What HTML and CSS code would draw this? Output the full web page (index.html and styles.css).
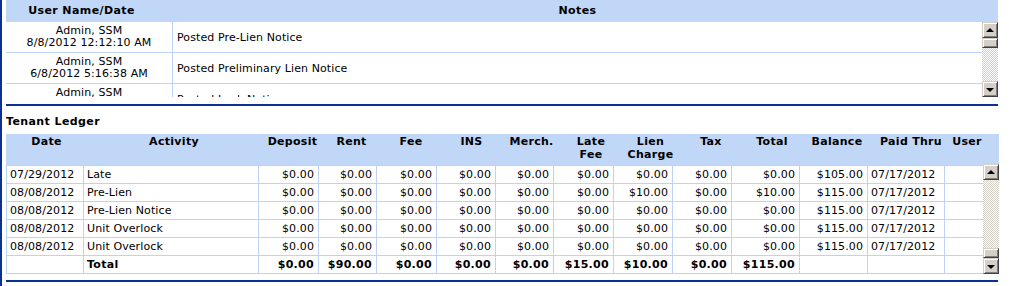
FILE: index.html
```html
<!DOCTYPE html>
<html>
<head>
<meta charset="utf-8">
<title>Tenant Notes and Ledger</title>
<link rel="stylesheet" href="styles.css">
</head>
<body>
<div class="page">
  <section class="notes">
    <div class="notes-head">
      <div class="nh-user">User Name/Date</div>
      <div class="nh-notes">Notes</div>
    </div>
    <div class="notes-body">
      <div class="notes-rows">
        <div class="note-row">
          <div class="n-user">Admin, SSM<br>8/8/2012 12:12:10 AM</div>
          <div class="n-text">Posted Pre-Lien Notice</div>
        </div>
        <div class="note-row">
          <div class="n-user">Admin, SSM<br>6/8/2012 5:16:38 AM</div>
          <div class="n-text">Posted Preliminary Lien Notice</div>
        </div>
        <div class="note-row">
          <div class="n-user">Admin, SSM<br>6/8/2012 5:10:02 AM</div>
          <div class="n-text">Posted Lock Notice</div>
        </div>
      </div>
      <div class="vscroll notes-scroll">
        <div class="sb-btn sb-up"><span class="tri-up"></span></div>
        <div class="sb-thumb"></div>
        <div class="sb-track"></div>
        <div class="sb-btn sb-down"><span class="tri-down"></span></div>
      </div>
    </div>
  </section>
  <div class="rule"></div>

  <h2 class="ledger-title">Tenant Ledger</h2>
  <section class="ledger">
    <div class="ledger-head">
      <div>Date</div>
      <div>Activity</div>
      <div>Deposit</div>
      <div>Rent</div>
      <div>Fee</div>
      <div>INS</div>
      <div>Merch.</div>
      <div>Late<br>Fee</div>
      <div>Lien<br>Charge</div>
      <div>Tax</div>
      <div>Total</div>
      <div>Balance</div>
      <div>Paid Thru</div>
      <div>User</div>
      <div></div>
    </div>
    <div class="ledger-body">
      <div class="ledger-rows">
        <div class="lrow">
          <div class="c-l">07/29/2012</div><div class="c-l">Late</div>
          <div>$0.00</div><div>$0.00</div><div>$0.00</div><div>$0.00</div><div>$0.00</div><div>$0.00</div><div>$0.00</div><div>$0.00</div><div>$0.00</div>
          <div>$105.00</div><div class="c-l">07/17/2012</div><div></div>
        </div>
        <div class="lrow">
          <div class="c-l">08/08/2012</div><div class="c-l">Pre-Lien</div>
          <div>$0.00</div><div>$0.00</div><div>$0.00</div><div>$0.00</div><div>$0.00</div><div>$0.00</div><div>$10.00</div><div>$0.00</div><div>$10.00</div>
          <div>$115.00</div><div class="c-l">07/17/2012</div><div></div>
        </div>
        <div class="lrow">
          <div class="c-l">08/08/2012</div><div class="c-l">Pre-Lien Notice</div>
          <div>$0.00</div><div>$0.00</div><div>$0.00</div><div>$0.00</div><div>$0.00</div><div>$0.00</div><div>$0.00</div><div>$0.00</div><div>$0.00</div>
          <div>$115.00</div><div class="c-l">07/17/2012</div><div></div>
        </div>
        <div class="lrow">
          <div class="c-l">08/08/2012</div><div class="c-l">Unit Overlock</div>
          <div>$0.00</div><div>$0.00</div><div>$0.00</div><div>$0.00</div><div>$0.00</div><div>$0.00</div><div>$0.00</div><div>$0.00</div><div>$0.00</div>
          <div>$115.00</div><div class="c-l">07/17/2012</div><div></div>
        </div>
        <div class="lrow">
          <div class="c-l">08/08/2012</div><div class="c-l">Unit Overlock</div>
          <div>$0.00</div><div>$0.00</div><div>$0.00</div><div>$0.00</div><div>$0.00</div><div>$0.00</div><div>$0.00</div><div>$0.00</div><div>$0.00</div>
          <div>$115.00</div><div class="c-l">07/17/2012</div><div></div>
        </div>
        <div class="lrow total">
          <div></div><div class="c-l">Total</div>
          <div>$0.00</div><div>$90.00</div><div>$0.00</div><div>$0.00</div><div>$0.00</div><div>$15.00</div><div>$10.00</div><div>$0.00</div><div>$115.00</div>
          <div></div><div></div><div></div>
        </div>
      </div>
      <div class="vscroll ledger-scroll">
        <div class="sb-btn sb-up"><span class="tri-up"></span></div>
        <div class="sb-track"></div>
        <div class="sb-thumb"></div>
        <div class="sb-btn sb-down"><span class="tri-down"></span></div>
      </div>
    </div>
  </section>
  <div class="rule"></div>
</div>
</body>
</html>
```

FILE: styles.css
```css
html, body {
  margin: 0;
  padding: 0;
  background: #ffffff;
}

body {
  font-family: "DejaVu Sans", Verdana, sans-serif;
  font-size: 11px;
  letter-spacing: 0.1px;
  color: #000000;
}

.page {
  border-left: 2px solid #0b3192;
  padding-left: 4px;
  min-height: 286px;
  box-sizing: border-box;
  width: 999px;
}

/* ---------- Notes ---------- */
.notes {
  width: 992px;
}

.notes-head {
  display: grid;
  grid-template-columns: 151px 1fr;
  height: 22px;
  background: #c1d7f7;
  font-weight: bold;
  letter-spacing: 0.4px;
  line-height: 22px;
  text-align: center;
}

.notes-body {
  display: flex;
  height: 75px;
}

.notes-rows {
  flex: 1;
  overflow: hidden;
}

.note-row {
  display: grid;
  grid-template-columns: 167px 1fr;
  border-bottom: 1px solid #bcd3f5;
  height: 31px;
  box-sizing: border-box;
}

.n-user {
  border-right: 1px solid #bcd3f5;
  text-align: center;
  line-height: 12px;
  padding-top: 3px;
}

.n-text {
  padding-left: 4px;
  display: flex;
  align-items: center;
}

/* ---------- Scrollbars ---------- */
.vscroll {
  width: 16px;
  display: flex;
  flex-direction: column;
  flex-shrink: 0;
}

.sb-btn,
.sb-thumb {
  background: #d4d0c8;
  box-sizing: border-box;
  border-top: 1px solid #d4d0c8;
  border-left: 1px solid #d4d0c8;
  border-right: 1px solid #404040;
  border-bottom: 1px solid #404040;
  box-shadow: inset 1px 1px 0 #ffffff, inset -1px -1px 0 #808080;
}

.sb-btn {
  height: 16px;
  display: flex;
  align-items: center;
  justify-content: center;
}

.sb-thumb {
  height: 10px;
}

.sb-track {
  flex: 1;
  background-color: #ffffff;
  background-image: conic-gradient(#d4d0c8 25%, #ffffff 0 50%, #d4d0c8 0 75%, #ffffff 0);
  background-size: 2px 2px;
}

.tri-up,
.tri-down {
  width: 0;
  height: 0;
  border-left: 4px solid transparent;
  border-right: 4px solid transparent;
}

.tri-up {
  border-bottom: 4px solid #000000;
  margin-top: -1px;
}

.tri-down {
  border-top: 4px solid #000000;
  margin-top: 1px;
}

/* ---------- Rules & titles ---------- */
.rule {
  height: 2px;
  background: #0b3192;
  width: 992px;
  margin-top: 7px;
}

.ledger-title {
  font-size: 11px;
  font-weight: bold;
  letter-spacing: 0.4px;
  line-height: 14px;
  margin: 9px 0 5px 0;
}

/* ---------- Ledger ---------- */
.ledger {
  width: 993px;
}

.ledger-head {
  display: grid;
  grid-template-columns: 81px 174px 63px 55px 64px 57px 63px 56px 63px 58px 64px 66px 82px 30px 1fr;
  height: 31px;
  background: #c1d7f7;
  font-weight: bold;
  letter-spacing: 0.3px;
  line-height: 13px;
  text-align: center;
  padding-top: 1px;
  box-sizing: border-box;
}

.ledger-head > div {
  white-space: nowrap;
}

.ledger-body {
  display: flex;
  height: 109px;
}

.ledger-rows {
  flex: 1;
  overflow: hidden;
  border-top: 1px solid #bcd3f5;
  border-left: 1px solid #bcd3f5;
}

.lrow {
  display: grid;
  grid-template-columns: 77px 175px 60px 58px 60px 59px 58px 60px 59px 59px 68px 68px 77px 38px;
  height: 18px;
}

.lrow > div {
  border-right: 1px solid #bcd3f5;
  border-bottom: 1px solid #bcd3f5;
  line-height: 17px;
  text-align: right;
  padding: 0 4px 0 3px;
  white-space: nowrap;
  overflow: hidden;
}

.lrow > div:last-child {
  border-right: none;
}

.lrow > .c-l {
  text-align: left;
  padding-left: 3px;
}

.lrow.total > div {
  font-weight: bold;
  letter-spacing: 0.3px;
}

.ledger-scroll {
  margin-top: -1px;
  height: 110px;
}

.ledger + .rule {
  margin-top: 6px;
  width: 992px;
}
```
